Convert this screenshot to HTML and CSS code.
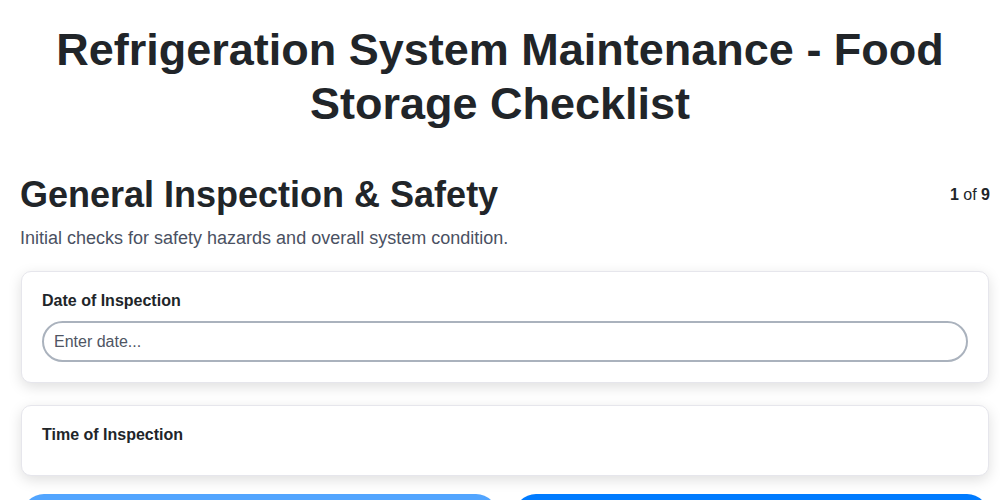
FILE: index.html
```html
<!DOCTYPE html>
<html lang="en">
<head>
<meta charset="utf-8">
<title>Refrigeration System Maintenance - Food Storage Checklist</title>
<link rel="stylesheet" href="styles.css">
</head>
<body>
<h1 class="title">Refrigeration System Maintenance - Food Storage Checklist</h1>
<main class="page">
  <div class="section-head">
    <h2 class="section-title">General Inspection &amp; Safety</h2>
    <div class="counter"><b>1</b> of <b>9</b></div>
  </div>
  <p class="section-desc">Initial checks for safety hazards and overall system condition.</p>

  <div class="card">
    <label class="field-label" for="date">Date of Inspection</label>
    <input class="field-input" id="date" type="text" placeholder="Enter date...">
  </div>

  <div class="card">
    <label class="field-label">Time of Inspection</label>
  </div>

  <div class="nav">
    <button class="btn btn-prev">Previous</button>
    <button class="btn btn-next">Next</button>
  </div>
</main>
</body>
</html>
```

FILE: styles.css
```css
* { box-sizing: border-box; }

body {
  margin: 0;
  font-family: "Liberation Sans", Arial, sans-serif;
  color: #212529;
  background: #ffffff;
}

.title {
  margin: 23px 0 0;
  font-size: 45px;
  line-height: 1.2;
  font-weight: 700;
  text-align: center;
  color: #212529;
}

.page {
  padding: 0 10px 0 20px;
}

.section-head {
  display: flex;
  justify-content: space-between;
  align-items: center;
  margin-top: 42px;
}

.section-title {
  margin: 0;
  font-size: 36px;
  line-height: 1.2;
  font-weight: 700;
  color: #212529;
}

.counter {
  font-size: 16px;
  color: #212529;
}

.section-desc {
  margin: 12px 0 21px;
  font-size: 18px;
  line-height: 1.2;
  color: #4a5162;
}

.card {
  margin: 0 1px 22px 1px;
  padding: 20px;
  background: #fff;
  border: 1px solid #e6e6ec;
  border-radius: 10px;
  box-shadow: 0 4px 14px rgba(0, 0, 0, 0.13);
}

.field-label {
  display: block;
  margin-bottom: 11px;
  font-size: 16px;
  line-height: 18px;
  font-weight: 700;
  color: #212529;
}

.field-input {
  display: block;
  width: 100%;
  margin-bottom: 0;
  padding: 10px 10px;
  font: 16px/17px "Liberation Sans", Arial, sans-serif;
  color: #212529;
  background: #fff;
  border: 2px solid #aab2bd;
  border-radius: 22px;
  outline: none;
}

.field-input::placeholder {
  color: #4f5563;
}

.nav {
  display: flex;
  gap: 16px;
  margin: -4px 1px 0 2px;
}

.btn {
  flex: 1;
  padding: 16px 20px;
  font: 700 16px "Liberation Sans", Arial, sans-serif;
  color: #fff;
  border: none;
  border-radius: 22px;
}

.btn-prev { background: #52a5ff; }
.btn-next { background: #007bff; }
```
